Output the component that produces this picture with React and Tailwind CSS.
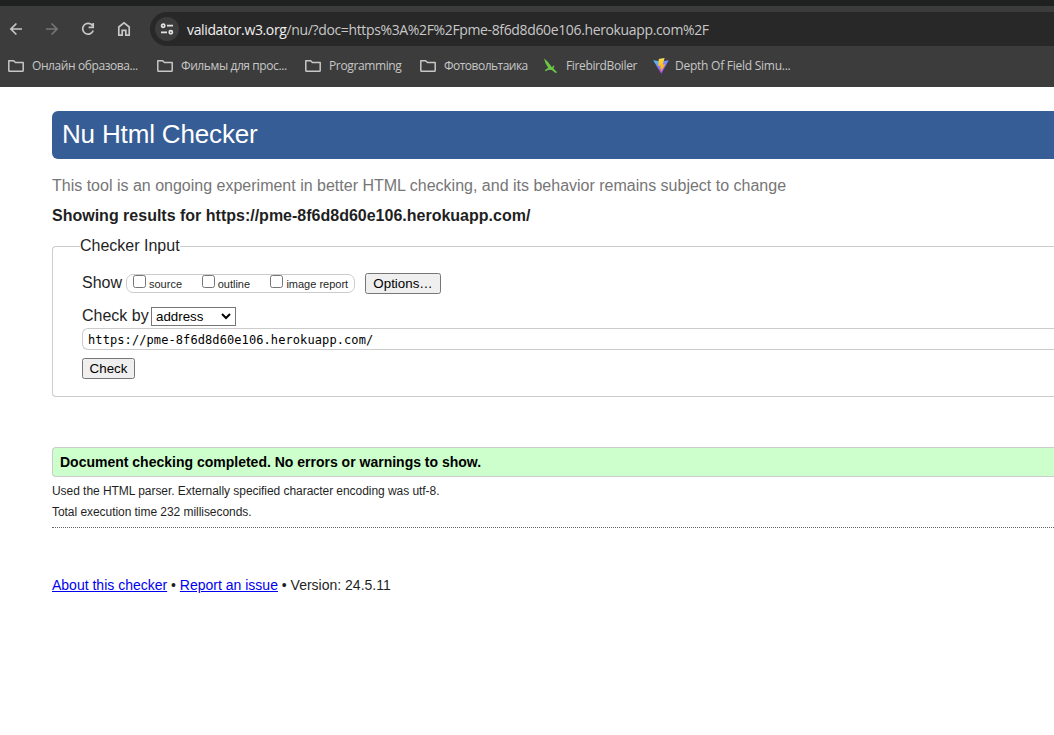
import React from "react";

const Folder = () => (
  <svg className="mr-2 h-4 w-4 shrink-0" viewBox="0 0 16 16" fill="none" stroke="#c7c7c7" strokeWidth="1.5" strokeLinejoin="round">
    <path d="M0.8 12.5V2.8h4.9l1.7 1.7h7.8v8a.8.8 0 0 1-.8.8H1.6a.8.8 0 0 1-.8-.8z" />
  </svg>
);

const Sword = () => (
  <svg className="ml-[1px] mr-[7px] h-4 w-4 shrink-0" viewBox="0 0 16 16" fill="#6cc644">
    <path d="M1 .4l3.6 3.2 4.3 5.6 1.7-1.7.8.5-1 2.6 3.4 3.4-.3 1-1.4-.2-3.3-2.7-3.2-.4-3 1.5-.8-.9 3.4-2.6L2.6 5.6z" />
  </svg>
);

const Vite = () => (
  <svg className="ml-[2px] mr-[6px] h-4 w-4 shrink-0" viewBox="0 0 16 16">
    <defs>
      <linearGradient id="prism" x1="0" y1="0" x2="0.6" y2="1">
        <stop offset="0" stopColor="#41d1ff" />
        <stop offset="1" stopColor="#bd34fe" />
      </linearGradient>
      <linearGradient id="bolt" x1="0" y1="0" x2="0" y2="1">
        <stop offset="0" stopColor="#ffea83" />
        <stop offset="0.2" stopColor="#ffcf28" />
        <stop offset="1" stopColor="#ffa800" />
      </linearGradient>
    </defs>
    <path d="M.2 2.2L8 3.5l7.8-1.3L8.3 15.8z" fill="url(#prism)" />
    <path d="M11.6 0L5.8 1.1l-.6 7 2.5-.5-.7 3.2 1.4-.4-.6 3.9 4.4-8-2.6.5z" fill="url(#bolt)" />
  </svg>
);

const bookmarks = [
  { label: "Онлайн образова...", icon: Folder, item: "w-[149px]", text: "tracking-[-0.41px]" },
  { label: "Фильмы для прос...", icon: Folder, item: "w-[148px]", text: "tracking-[-0.41px]" },
  { label: "Programming", icon: Folder, item: "w-[115px]", text: "tracking-[-0.37px]" },
  { label: "Фотовольтаика", icon: Folder, item: "w-[122px]", text: "tracking-[-0.52px]" },
  { label: "FirebirdBoiler", icon: Sword, item: "w-[109px]", text: "tracking-[-0.36px]" },
  { label: "Depth Of Field Simu...", icon: Vite, item: "w-[150px]", text: "tracking-[-0.25px]" },
];

function BrowserBar() {
  return (
    <header className="h-[87px] overflow-hidden border-t-[6px] border-[#1f2121] bg-[#3c3c3c] font-['Open_Sans','Noto_Sans',sans-serif]">
      <div className="flex h-[46px] items-center">
        <div className="flex w-[150px] items-center gap-5 pl-2">
          <svg className="h-4 w-4" viewBox="0 0 16 16" fill="none" stroke="#c7c7c7" strokeWidth="1.7">
            <path d="M14 8H3M8.4 2.5L2.9 8l5.5 5.5" />
          </svg>
          <svg className="h-4 w-4" viewBox="0 0 16 16" fill="none" stroke="#757575" strokeWidth="1.7">
            <path d="M2 8h11M7.6 2.5L13.1 8l-5.5 5.5" />
          </svg>
          <svg className="h-4 w-4" viewBox="0 0 16 16" fill="none" stroke="#c7c7c7" strokeWidth="1.7">
            <path d="M12.6 4.8A5.4 5.4 0 1 0 13.2 9.5M13.2 2v4.3H8.6" />
          </svg>
          <svg className="h-4 w-4" viewBox="0 0 16 16" fill="none" stroke="#c7c7c7" strokeWidth="1.7">
            <path d="M2.8 14.2V6L8 1.9 13.2 6v8.2H9.8V9.3H6.2v4.9z" />
          </svg>
        </div>
        <div className="flex h-[34px] flex-1 items-center rounded-l-full bg-[#282828] pl-[5px]">
          <div className="flex h-6 w-6 items-center justify-center rounded-full bg-[#3c3c3c]">
            <svg className="h-4 w-4" viewBox="0 0 16 16" fill="none" stroke="#e3e3e3" strokeWidth="1.7">
              <circle cx="4.2" cy="4.7" r="1.6" />
              <path d="M8 4.7h6M2 11.3h6" />
              <circle cx="11.8" cy="11.3" r="1.6" />
            </svg>
          </div>
          <p className="ml-2 whitespace-nowrap pt-px text-[14px] leading-5 tracking-[-0.36px] text-[#c7c7c7]">
            <span className="text-[#f0f0f0]">validator.w3.org</span>/nu/?doc=https%3A%2F%2Fpme-8f6d8d60e106.herokuapp.com%2F
          </p>
        </div>
      </div>
      <nav className="flex h-7 items-center pl-2">
        {bookmarks.map(({ label, icon: Icon, item, text }) => (
          <a key={label} className={`flex shrink-0 items-center ${item}`}>
            <Icon />
            <span className={`whitespace-nowrap text-[12px] leading-4 text-[#c7c7c7] ${text}`}>{label}</span>
          </a>
        ))}
      </nav>
    </header>
  );
}

const Box = ({ label, className }) => (
  <label className={`flex items-center ${className}`}>
    <span className="mb-[3px] h-[13px] w-[13px] shrink-0 rounded-[2.5px] border border-[#767676] bg-white" />
    <span className="ml-[3px] mt-px whitespace-nowrap text-[11px] leading-3">{label}</span>
  </label>
);

export default function App() {
  return (
    <div className="h-[735px] w-full overflow-hidden bg-white">
      <BrowserBar />
      <main className="pl-[52px] pt-6 font-['Liberation_Sans',Arial,sans-serif] text-[#1f1f1f]">
        <h1 className="flex h-12 items-center rounded-l-[6px] bg-[#365d95] pb-[2px] pl-[10px] text-[26px] tracking-[-0.16px] text-white">
          Nu Html Checker
        </h1>
        <p className="mt-[17px] text-[16px] leading-5 text-[#767676]">
          This tool is an ongoing experiment in better HTML checking, and its behavior remains subject to change
        </p>
        <h2 className="mt-[10px] text-[16px] font-bold leading-5">
          Showing results for https://pme-8f6d8d60e106.herokuapp.com/
        </h2>
        <fieldset className="mt-[10px] h-[161px] rounded-l-[4px] border border-r-0 border-[#ccc] pl-[29px]">
          <legend className="-ml-[2px] h-[21px] text-[16px] leading-5">Checker Input</legend>
          <div className="mt-[15px] flex h-[22px] items-center text-[16px]">
            <span className="w-[44px]">Show</span>
            <div className="flex h-[19px] w-[229px] items-center rounded-[7px] border border-[#ccc] pl-[6px]">
              <Box label="source" className="w-[69px]" />
              <Box label="outline" className="w-[69px]" />
              <Box label="image report" className="w-[84px]" />
            </div>
            <button className="ml-[10px] h-[21px] w-[76px] rounded-[2.5px] border border-[#767676] bg-[#efefef] text-[13.333px] leading-[19px] text-black">
              Options…
            </button>
          </div>
          <div className="mt-[12px] flex h-[20px] items-center text-[16px]">
            <span className="w-[69px]">Check by</span>
            <div className="flex h-[19px] w-[85px] items-center justify-between border border-[#767676] pl-1 pr-1 text-[13.333px] leading-[17px] text-black">
              address
              <svg className="h-[10px] w-[10px]" viewBox="0 0 10 10" fill="none" stroke="#000" strokeWidth="2">
                <path d="M1 3l4 4 4-4" />
              </svg>
            </div>
          </div>
          <div className="mt-[2px] flex h-[22px] items-center rounded-l-[6px] border border-r-0 border-[#ccc] pl-[5px] pt-[2px] font-['DejaVu_Sans_Mono',monospace] text-[12px] tracking-[0.09px] text-black">
            https://pme-8f6d8d60e106.herokuapp.com/
          </div>
          <button className="mt-2 block h-[21px] w-[53px] rounded-[2.5px] border border-[#767676] bg-[#efefef] text-[13.333px] leading-[19px] text-black">
            Check
          </button>
        </fieldset>
        <p className="mt-[50px] flex h-[30px] items-center rounded-l-[4px] border border-r-0 border-[#ccc] bg-[#ccffcc] pl-[7px] text-[14px] font-bold text-black">
          Document checking completed. No errors or warnings to show.
        </p>
        <p className="mt-1 text-[12px] leading-[21px] tracking-[-0.05px]">
          Used the HTML parser. Externally specified character encoding was utf-8.
        </p>
        <p className="h-[26px] border-b border-dotted border-[#666] text-[12px] leading-[21px] tracking-[-0.05px]">
          Total execution time 232 milliseconds.
        </p>
        <p className="mt-[47px] text-[14px] leading-5">
          <a className="text-[#0000ee] underline">About this checker</a> •{" "}
          <a className="text-[#0000ee] underline">Report an issue</a> • Version: 24.5.11
        </p>
      </main>
    </div>
  );
}
